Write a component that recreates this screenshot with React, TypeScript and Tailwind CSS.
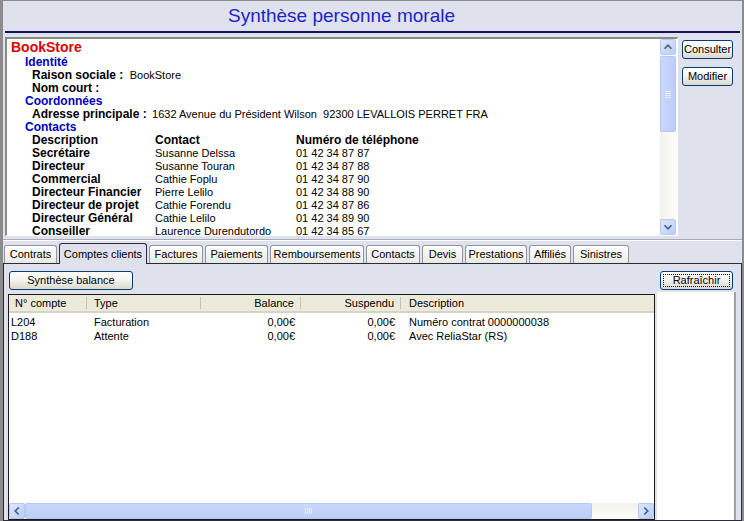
import React from "react";

const F = { fontFamily: '"Liberation Sans", Arial, sans-serif' };

function ArrowBtn({ dir, cls = "" }: { dir: "up" | "down" | "left" | "right"; cls?: string }) {
  const paths: Record<string, string> = {
    up: "M4 10 L8 6 L12 10",
    down: "M4 6 L8 10 L12 6",
    left: "M10 4 L6 8 L10 12",
    right: "M6 4 L10 8 L6 12",
  };
  return (
    <div className={"w-[16px] h-[16px] shrink-0 rounded-[2px] border border-[#b7c9f3] bg-gradient-to-br from-[#dde8fe] to-[#b9cdf8] flex items-center justify-center " + cls}>
      <svg width="16" height="16" viewBox="0 0 16 16">
        <path d={paths[dir]} fill="none" stroke="#4d6185" strokeWidth="2" />
      </svg>
    </div>
  );
}

function XpButton({ label, w, focus = false }: { label: string; w: string; focus?: boolean }) {
  return (
    <div className={`${w} h-[19px] rounded-[3px] border border-[#003c74] bg-gradient-to-b from-[#ffffff] via-[#f3f3ee] to-[#d9d9ce] flex items-center justify-center text-[11px] text-black p-[2px]`}>
      <div className={`w-full h-full flex items-center justify-center whitespace-nowrap ${focus ? "border border-dotted border-black" : ""}`}>{label}</div>
    </div>
  );
}

const contacts = [
  ["Secrétaire", "Susanne Delssa", "01 42 34 87 87"],
  ["Directeur", "Susanne Touran", "01 42 34 87 88"],
  ["Commercial", "Cathie Foplu", "01 42 34 87 90"],
  ["Directeur Financier", "Pierre Lelilo", "01 42 34 88 90"],
  ["Directeur de projet", "Cathie Forendu", "01 42 34 87 86"],
  ["Directeur Général", "Cathie Lelilo", "01 42 34 89 90"],
  ["Conseiller", "Laurence Durendutordo", "01 42 34 85 67"],
];

const tabs: [string, string][] = [
  ["Contrats", "w-[53px]"],
  ["Comptes clients", "w-[88px]"],
  ["Factures", "w-[54px]"],
  ["Paiements", "w-[63px]"],
  ["Remboursements", "w-[94px]"],
  ["Contacts", "w-[54px]"],
  ["Devis", "w-[41px]"],
  ["Prestations", "w-[62px]"],
  ["Affiliés", "w-[42px]"],
  ["Sinistres", "w-[56px]"],
];

const rows = [
  ["L204", "Facturation", "0,00€", "0,00€", "Numéro contrat 0000000038"],
  ["D188", "Attente", "0,00€", "0,00€", "Avec ReliaStar (RS)"],
];

export default function App() {
  return (
    <div style={F} className="w-[744px] h-[521px] overflow-hidden bg-[#dfe2ec] border-l-[3px] border-t border-r-[2px] border-[#8c8c8c] flex flex-col text-black">
      {/* Title */}
      <div className="h-[30px] flex items-center justify-center text-[19px] text-[#2222c8] pr-[62px]">Synthèse personne morale</div>
      <div className="h-[2px] bg-[#14145a] ml-[2px] mr-[2px]" />

      {/* Upper section */}
      <div className="flex mt-[4px] h-[199px]">
        <div className="ml-[2px] w-[673px] h-[199px] border-t-2 border-l-2 border-[#8a8a86] border-b border-r border-b-white border-r-white bg-white flex">
          <div className="flex-1 overflow-hidden text-[12px]">
            <div className="h-[17px] pl-[4px] text-[14px] font-bold text-[#e00000] leading-[17px]">BookStore</div>
            <div className="h-[13px] leading-[13px] pl-[18px] font-bold text-[#0000c0]">Identité</div>
            <div className="h-[13px] leading-[13px] pl-[25px] whitespace-nowrap"><span className="font-bold">Raison sociale : </span><span className="ml-[3px] text-[11px]">BookStore</span></div>
            <div className="h-[13px] leading-[13px] pl-[25px] font-bold">Nom court :</div>
            <div className="h-[13px] leading-[13px] pl-[18px] font-bold text-[#0000c0]">Coordonnées</div>
            <div className="h-[13px] leading-[13px] pl-[25px] whitespace-nowrap"><span className="font-bold">Adresse principale : </span><span className="ml-[2px] text-[11px]">1632 Avenue du Président Wilson&nbsp; 92300 LEVALLOIS PERRET FRA</span></div>
            <div className="h-[13px] leading-[13px] pl-[18px] font-bold text-[#0000c0]">Contacts</div>
            <div className="grid grid-cols-[123px_141px_1fr] pl-[25px] h-[13px] leading-[13px] font-bold">
              <div>Description</div><div>Contact</div><div>Numéro de téléphone</div>
            </div>
            {contacts.map((c) => (
              <div key={c[0]} className="grid grid-cols-[123px_141px_1fr] pl-[25px] h-[13px] leading-[13px] whitespace-nowrap">
                <div className="font-bold">{c[0]}</div><div className="text-[11px]">{c[1]}</div><div className="text-[11px]">{c[2]}</div>
              </div>
            ))}
          </div>
          {/* vertical scrollbar */}
          <div className="w-[17px] h-full bg-gradient-to-r from-[#f3f2ec] to-[#fefefb] flex flex-col">
            <ArrowBtn dir="up" />
            <div className="mt-[1px] h-[76px] w-[16px] rounded-[2px] border border-[#b3c8f5] bg-gradient-to-r from-[#c9d8fc] to-[#bccefa] flex items-center justify-center">
              <div className="flex flex-col gap-[1px]">
                <div className="w-[6px] h-[1px] bg-[#e9efff]" />
                <div className="w-[6px] h-[1px] bg-[#e9efff]" />
                <div className="w-[6px] h-[1px] bg-[#e9efff]" />
                <div className="w-[6px] h-[1px] bg-[#e9efff]" />
              </div>
            </div>
            <div className="flex-1" />
            <ArrowBtn dir="down" />
          </div>
        </div>
        <div className="ml-[4px] flex flex-col gap-[8px] pt-[3px]">
          <XpButton label="Consulter" w="w-[51px]" />
          <XpButton label="Modifier" w="w-[51px]" />
        </div>
      </div>

      {/* separator */}
      <div className="mt-[3px] h-[1px] bg-[#a9abb4]" />
      <div className="h-[1px] bg-white" />

      {/* Tabs */}
      <div className="flex items-end gap-[2px] pl-[1px] h-[21px] mt-[1px] text-[11px]">
        {tabs.map(([t, w]) =>
          t === "Comptes clients" ? (
            <div key={t} className={`${w} h-[21px] -mb-[1px] relative z-10 rounded-t-[3px] border border-b-0 border-[#2c2c38] bg-[#dfe2ec] flex items-center justify-center whitespace-nowrap`}>{t}</div>
          ) : (
            <div key={t} className={`${w} h-[18px] rounded-t-[3px] border border-b-0 border-[#8e95a3] bg-gradient-to-b from-[#ffffff] to-[#e9e9e4] flex items-center justify-center whitespace-nowrap`}>{t}</div>
          )
        )}
      </div>

      {/* Tab panel */}
      <div className="flex-1 border border-[#2c2c38] flex">
        <div className="flex flex-col pl-[5px] pt-[7px] w-[651px]">
          <XpButton label="Synthèse balance" w="w-[124px]" />
          <div className="mt-[4px] ml-[-1px] flex-1 border border-[#1a1a1a] bg-white flex flex-col text-[11px]">
            <div className="h-[18px] bg-[#ebeadb] border-b-2 border-[#d6d3c2] grid grid-cols-[78px_114px_100px_100px_1fr] items-center">
              <div className="pl-[6px] border-r border-[#c7c5b2] h-[12px] leading-[12px]">N° compte</div>
              <div className="pl-[7px] border-r border-[#c7c5b2] h-[12px] leading-[12px]">Type</div>
              <div className="pr-[6px] text-right border-r border-[#c7c5b2] h-[12px] leading-[12px]">Balance</div>
              <div className="pr-[6px] text-right border-r border-[#c7c5b2] h-[12px] leading-[12px]">Suspendu</div>
              <div className="pl-[8px] h-[12px] leading-[12px]">Description</div>
            </div>
            <div className="h-[2px]" />
            {rows.map((r) => (
              <div key={r[0]} className="h-[14px] leading-[14px] grid grid-cols-[78px_114px_100px_100px_1fr] whitespace-nowrap">
                <div className="pl-[2px]">{r[0]}</div>
                <div className="pl-[7px]">{r[1]}</div>
                <div className="pr-[6px] text-right">{r[2]}</div>
                <div className="pr-[6px] text-right">{r[3]}</div>
                <div className="pl-[8px]">{r[4]}</div>
              </div>
            ))}
            <div className="flex-1" />
            {/* horizontal scrollbar */}
            <div className="h-[16px] flex bg-gradient-to-b from-[#f3f2ec] to-[#fefefb]">
              <ArrowBtn dir="left" />
              <div className="w-[567px] h-[16px] rounded-[2px] border border-[#b3c8f5] bg-gradient-to-b from-[#c9d8fc] to-[#bccefa] flex items-center justify-center">
                <div className="flex gap-[1px]">
                  <div className="w-[1px] h-[6px] bg-[#e9efff]" />
                  <div className="w-[1px] h-[6px] bg-[#e9efff]" />
                  <div className="w-[1px] h-[6px] bg-[#e9efff]" />
                  <div className="w-[1px] h-[6px] bg-[#e9efff]" />
                </div>
              </div>
              <div className="flex-1" />
              <ArrowBtn dir="right" />
            </div>
          </div>
        </div>
        <div className="flex flex-col pt-[7px] pl-[5px] w-[84px]">
          <XpButton label="Rafraîchir" w="w-[73px]" focus />
          <div className="mt-[2px] flex-1 w-[79px] -ml-[3px] bg-white border-r-2 border-[#a0a0a8]" />
        </div>
      </div>
    </div>
  );
}
